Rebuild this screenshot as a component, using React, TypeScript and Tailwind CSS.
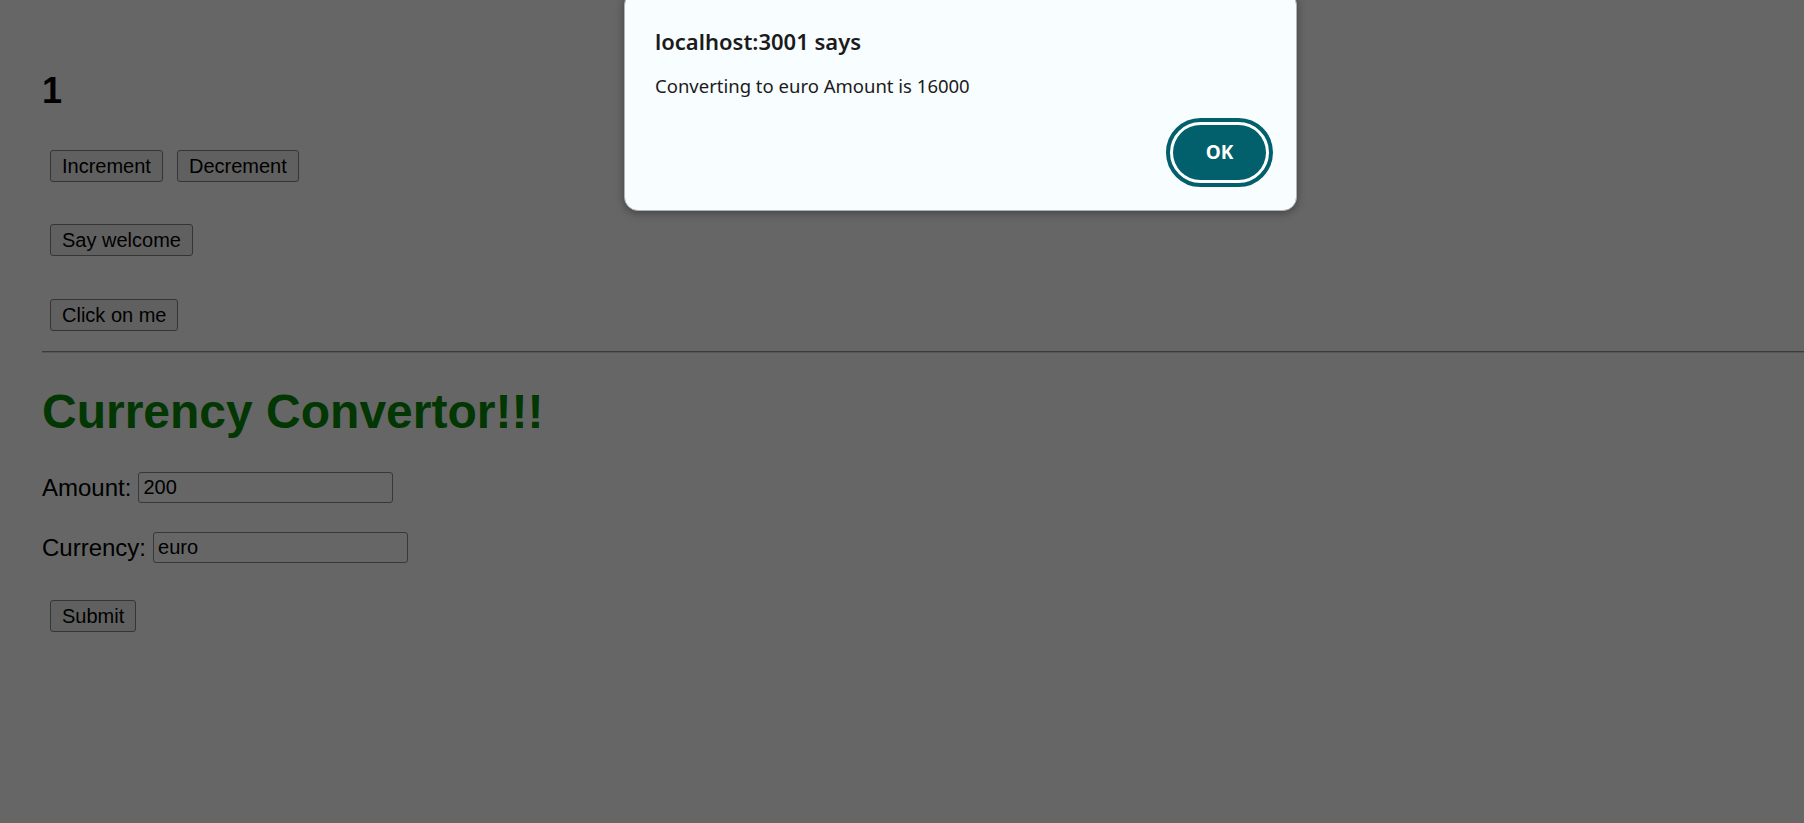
import React from 'react';

const pageFont = { fontFamily: '"Liberation Sans", Arial, sans-serif' };

function PageButton({ label }: { label: string }) {
  return (
    <button
      type="button"
      className="ml-[8px] h-[32px] rounded-[3px] border-[1.5px] border-[#353535] bg-[#606060] px-[11px] text-[20px] leading-[23px] text-black"
    >
      {label}
    </button>
  );
}

function Field({ label, value }: { label: string; value: string }) {
  return (
    <div className="flex h-[31px] items-center">
      <label className="text-[24px] leading-[28px] text-black">{label}</label>
      <input
        readOnly
        value={value}
        className="ml-[7px] h-[31px] w-[255px] rounded-[3px] border-[1.5px] border-[#383838] bg-[#666666] px-[4px] text-[20px] text-black outline-none"
        style={pageFont}
      />
    </div>
  );
}

function AlertDialog() {
  return (
    <div
      className="absolute left-[624px] top-[-9px] h-[220px] w-[673px] rounded-[14px] border border-[#aeb3b5] bg-[#f8fdff] pl-[30px] pr-[23px] pt-[34px] shadow-[0_2px_8px_rgba(0,0,0,0.35)]"
      style={{ fontFamily: '"Noto Sans", "Open Sans", sans-serif' }}
    >
      <h2 className="text-[22px] font-semibold leading-[30px] text-[#1b1b1b]">localhost:3001 says</h2>
      <p className="mt-[17px] text-[18.5px] leading-[25px] text-[#1b1b1b]">
        Converting to euro Amount is 16000
      </p>
      <div className="mt-[20px] flex justify-end">
        <button
          type="button"
          className="h-[69px] w-[107px] rounded-full border-[4px] border-[#02606c] bg-white p-[3px]"
        >
          <span className="flex h-full w-full items-center justify-center rounded-full bg-[#02606c] text-[19px] font-bold text-white">
            OK
          </span>
        </button>
      </div>
    </div>
  );
}

export default function App() {
  return (
    <div className="relative min-h-screen overflow-hidden bg-[#666666] pl-[42px]" style={pageFont}>
      <h2 className="mt-[70px] text-[36px] font-bold leading-[41px] text-black">1</h2>

      <div className="mt-[39px] flex gap-[6px]">
        <PageButton label="Increment" />
        <PageButton label="Decrement" />
      </div>

      <div className="mt-[42px] flex">
        <PageButton label="Say welcome" />
      </div>

      <div className="mt-[43px] flex">
        <PageButton label="Click on me" />
      </div>

      <div className="mt-[20px] h-[2px] border-t border-b border-t-[#3c3c3c] border-b-[#575757]" />

      <h1 className="mt-[32px] text-[48px] font-bold leading-[54px] text-[#023602]">Currency Convertor!!!</h1>

      <div className="mt-[33px]">
        <Field label="Amount:" value="200" />
      </div>
      <div className="mt-[29px]">
        <Field label="Currency:" value="euro" />
      </div>

      <div className="mt-[37px] flex">
        <PageButton label="Submit" />
      </div>

      <AlertDialog />
    </div>
  );
}
